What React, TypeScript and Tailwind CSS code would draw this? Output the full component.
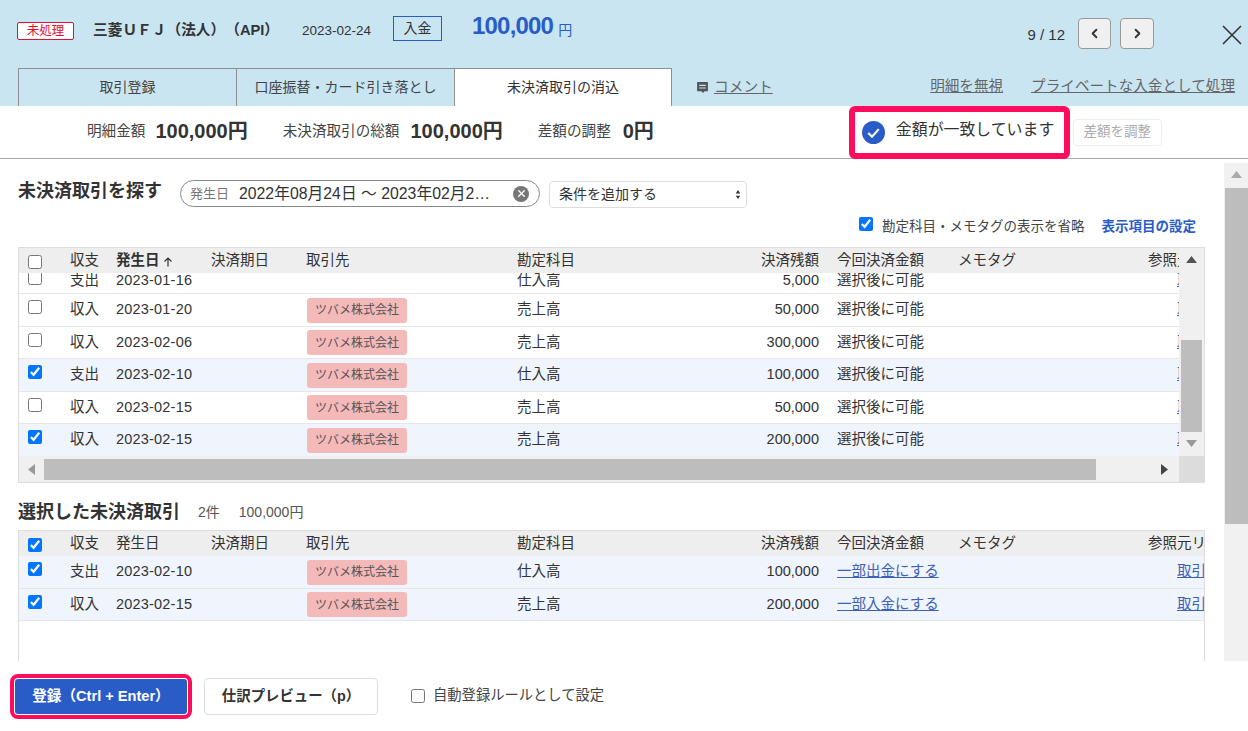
import { ChevronLeft, ChevronRight, X } from 'lucide-react';
import type { ReactNode } from 'react';

const FONT = "font-['Liberation_Sans','Noto_Sans_CJK_JP',sans-serif]";

type Row = { type: string; date: string; tag?: boolean; account: string; amount: string; checked?: boolean };

const searchRows: Row[] = [
  { type: '支出', date: '2023-01-16', account: '仕入高', amount: '5,000' },
  { type: '収入', date: '2023-01-20', tag: true, account: '売上高', amount: '50,000' },
  { type: '収入', date: '2023-02-06', tag: true, account: '売上高', amount: '300,000' },
  { type: '支出', date: '2023-02-10', tag: true, account: '仕入高', amount: '100,000', checked: true },
  { type: '収入', date: '2023-02-15', tag: true, account: '売上高', amount: '50,000' },
  { type: '収入', date: '2023-02-15', tag: true, account: '売上高', amount: '200,000', checked: true },
];

function Check({ checked, className = '' }: { checked?: boolean; className?: string }) {
  return <input type="checkbox" checked={!!checked} readOnly className={`m-0 size-[14px] shrink-0 ${className}`} />;
}

function HeaderRow({ checked, sorted, refLabel }: { checked?: boolean; sorted?: boolean; refLabel: string }) {
  return (
    <div className="flex h-[25px] w-[1240px] items-center bg-[#eeeeee] text-[14.5px] text-[#333]">
      <div className="w-[51px] pl-[9px]">
        <Check checked={checked} className="mt-[2px] block" />
      </div>
      <div className="w-[46px]">収支</div>
      <div className={`flex w-[95px] items-center ${sorted ? 'font-bold' : ''}`}>
        発生日
        {sorted && (
          <svg viewBox="0 0 10 10" className="ml-[3px] mt-[3px] size-[10px]" fill="none" stroke="#333" strokeWidth="1.2">
            <path d="M5 9.5V1M1.5 4.5 5 1l3.5 3.5" />
          </svg>
        )}
      </div>
      <div className="w-[95px]">決済期日</div>
      <div className="w-[211px]">取引先</div>
      <div className="w-[180px]">勘定科目</div>
      <div className="w-[122px] text-right">決済残額</div>
      <div className="ml-[18px] w-[121px]">今回決済金額</div>
      <div className="w-[190px]">メモタグ</div>
      <div className="whitespace-nowrap">{refLabel}</div>
    </div>
  );
}

function DataRow({ row, action, first }: { row: Row; action?: ReactNode; first?: boolean }) {
  return (
    <div
      className={`flex w-[1240px] items-center border-b border-[#e6e6e6] pt-px text-[14.5px] text-[#333] ${
        row.checked ? 'bg-[#f0f4fd]' : 'bg-white'
      } ${first ? 'mt-[-6px] h-[27px]' : 'h-[32.5px]'}`}
    >
      <div className="w-[51px] pb-[6px] pl-[9px]">
        <Check checked={row.checked} className="block" />
      </div>
      <div className="w-[46px]">{row.type}</div>
      <div className="w-[190px] tracking-[0.2px]">{row.date}</div>
      <div className="w-[211px]">
        {row.tag && (
          <span className="ml-px flex h-[25px] w-[100px] items-center justify-center rounded-[3px] bg-[#f4b9b9] text-[12px] text-[#555]">
            ツバメ株式会社
          </span>
        )}
      </div>
      <div className="w-[180px]">{row.account}</div>
      <div className="w-[122px] text-right">{row.amount}</div>
      <div className="ml-[18px] w-[311px]">{action ?? '選択後に可能'}</div>
      <div className="pl-[29px]">
        <span className="whitespace-nowrap text-[#3b62b8] underline">取引を開く</span>
      </div>
    </div>
  );
}

function Triangle({ dir, color = '#555' }: { dir: 'up' | 'down' | 'left' | 'right'; color?: string }) {
  const paths = { up: 'M0 8 5.5 1 11 8z', down: 'M0 1h11L5.5 8z', left: 'M9 0v11L2 5.5z', right: 'M2 0v11l7-5.5z' };
  return (
    <svg viewBox="0 0 11 11" className="size-[11px]" fill={color}>
      <path d={paths[dir]} />
    </svg>
  );
}

export default function App() {
  return (
    <div className={`${FONT} h-[731px] w-[1248px] overflow-hidden bg-white text-[#333] [text-spacing-trim:space-all]`}>
      {/* header */}
      <div className="h-[106px] bg-[#c9e5f2]">
        <div className="flex h-[68px] items-start pl-[17px] pr-[6px]">
          <span className="mt-[22px] flex h-[18px] w-[57px] items-center justify-center rounded-[2px] border border-[#e0102f] bg-white text-[12.5px] text-[#e0102f]">
            未処理
          </span>
          <span className="ml-[19px] mt-[19px] w-[209px] whitespace-nowrap text-[14.7px] font-bold">三菱ＵＦＪ（法人）（API）</span>
          <span className="mt-[21px] w-[91px] text-[13.5px]">2023-02-24</span>
          <span className="mt-[16px] flex h-[25px] w-[49px] items-center justify-center border border-[#2a5cc8] text-[14px]">
            入金
          </span>
          <span className="ml-[30px] mt-[8px] text-[24px] font-bold tracking-[-0.8px] text-[#2a5cc8]">100,000</span>
          <span className="ml-[5px] mt-[20px] text-[14px] text-[#2a5cc8]">円</span>
          <span className="ml-auto mt-[24px] text-[15px]">9 / 12</span>
          <button className="ml-[13px] mt-[18px] flex h-[31px] w-[33px] items-center justify-center rounded-[4px] border border-[#999] bg-[#f0f0f0]">
            <ChevronLeft size={15} strokeWidth={3} />
          </button>
          <button className="ml-[9px] mt-[18px] flex h-[31px] w-[34px] items-center justify-center rounded-[4px] border border-[#999] bg-[#f0f0f0]">
            <ChevronRight size={15} strokeWidth={3} />
          </button>
          <svg viewBox="0 0 20 20" className="ml-[68px] mt-[25px] size-[20px]" fill="none" stroke="#333" strokeWidth="1.6">
            <path d="M1 1l18 18M19 1 1 19" />
          </svg>
        </div>
        <div className="flex h-[38px] items-center pl-[18px] pr-[13px] text-[14px]">
          <div className="flex h-full w-[218px] items-center justify-center border-l border-t border-[#8f8f8f] text-[#444]">取引登録</div>
          <div className="flex h-full w-[218px] items-center justify-center border-l border-t border-[#8f8f8f] text-[#444]">口座振替・カード引き落とし</div>
          <div className="flex h-full w-[218px] items-center justify-center border-x border-t border-[#8f8f8f] bg-white">未決済取引の消込</div>
          <svg viewBox="0 0 12 12" className="ml-[24px] mt-px size-[13px]" fill="#555">
            <path d="M1 1h10v8.5H8L6.500 11 5 9.500H1zM3 3.500v1h6v-1zM3 6v1h6V6z" fillRule="evenodd" />
          </svg>
          <span className="ml-[5px] text-[14.7px] text-[#666] underline">コメント</span>
          <span className="ml-auto text-[14.6px] text-[#666] underline">明細を無視</span>
          <span className="ml-[28px] text-[14.6px] text-[#666] underline">プライベートな入金として処理</span>
        </div>
      </div>

      {/* summary */}
      <div className="flex h-[53px] items-center border-b border-[#aaa] pl-[87px] text-[14.6px] text-[#444]">
        <span>明細金額</span>
        <span className="ml-[10px] mt-[-3px] text-[20px] font-bold text-[#333]">100,000円</span>
        <span className="ml-[35px]">未決済取引の総額</span>
        <span className="ml-[11px] mt-[-3px] text-[20px] font-bold text-[#333]">100,000円</span>
        <span className="ml-[35px]">差額の調整</span>
        <span className="ml-[12px] mt-[-3px] text-[20px] font-bold text-[#333]">0円</span>
        <div className="ml-[195px] flex h-[53px] w-[221px] items-center rounded-[6px] border-[6px] border-[#ff0d5c] pl-[7px]">
          <svg viewBox="0 0 24 24" className="size-[23px] shrink-0">
            <circle cx="12" cy="12" r="12" fill="#2a5cc8" />
            <path d="m6.500 12.500 4 4 7-8" fill="none" stroke="#fff" strokeWidth="2.200" />
          </svg>
          <span className="ml-[11px] mt-[-5px] whitespace-nowrap text-[15.900px] text-[#333]">金額が一致しています</span>
        </div>
        <button className="ml-[3px] flex h-[27px] w-[89px] items-center justify-center rounded-[4px] border border-[#eee] text-[13.500px] text-[#aaa]">
          差額を調整
        </button>
      </div>

      {/* scrolling body */}
      <div className="flex h-[502px]">
        <div className="w-[1224px] overflow-hidden pl-[18px] pr-[19px]">
          <div className="flex h-[49px] items-start pt-[21px]">
            <h2 className="w-[162px] text-[18px] font-bold leading-[22px]">未決済取引を探す</h2>
            <div className="flex h-[27px] w-[360px] items-center rounded-full border border-[#888] pl-[9px] pr-[10px]">
              <span className="text-[13px] text-[#777]">発生日</span>
              <span className="ml-[10px] w-[265px] whitespace-nowrap text-[15.800px]">2022年08月24日 ～ 2023年02月2…</span>
              <span className="ml-auto flex size-[16px] items-center justify-center rounded-full bg-[#777] text-white">
                <X size={11} strokeWidth={3} />
              </span>
            </div>
            <div className="ml-[9px] mt-px flex h-[27px] w-[198px] items-center justify-between rounded-[4px] border border-[#ddd] pl-[9px] pr-[5px] text-[14px]">
              条件を追加する
              <svg viewBox="0 0 8 14" className="h-[11px] w-[6px]" fill="#333">
                <path d="M4 1 7 5.500H1zM4 13 1 8.500h6z" />
              </svg>
            </div>
          </div>
          <div className="flex h-[39px] items-start justify-end pr-[9px] pt-[8px]">
            <Check checked className="mt-px" />
            <span className="ml-[9px] mt-px text-[13.500px] text-[#444]">勘定科目・メモタグの表示を省略</span>
            <span className="ml-[17px] mt-px text-[13.500px] font-bold text-[#2a5cc8]">表示項目の設定</span>
          </div>

          {/* search results */}
          <div className="h-[236px] border border-[#ddd]">
            <div className="flex h-[208px]">
              <div className="w-[1160px] overflow-hidden">
                <HeaderRow sorted refLabel="参照元リンク" />
                <div className="h-[184px] overflow-hidden">
                  {searchRows.map((row, i) => (
                    <DataRow key={i} row={row} first={i === 0} />
                  ))}
                </div>
              </div>
              <div className="flex w-[25px] flex-col bg-[#f0f0f0]">
                <div className="flex h-[25px] items-center justify-center">
                  <Triangle dir="up" />
                </div>
                <div className="mx-[2px] mt-[67px] h-[92px] bg-[#bdbdbd]" />
                <div className="flex h-[24px] items-center justify-center">
                  <Triangle dir="down" color="#999" />
                </div>
              </div>
            </div>
            <div className="flex h-[26px]">
              <div className="flex w-[1160px] items-center bg-[#f0f0f0]">
                <div className="flex w-[25px] justify-center">
                  <Triangle dir="left" color="#999" />
                </div>
                <div className="h-[21px] w-[1052px] bg-[#bdbdbd]" />
                <div className="ml-[63px]">
                  <Triangle dir="right" color="#444" />
                </div>
              </div>
              <div className="w-[25px] bg-[#dcdcdc]" />
            </div>
          </div>

          {/* selected */}
          <div className="flex h-[47px] items-end pb-[7px]">
            <h2 className="text-[18px] font-bold leading-[22px]">選択した未決済取引</h2>
            <span className="ml-[18px] text-[14px] text-[#555]">2件</span>
            <span className="ml-[19px] text-[14px] text-[#555]">100,000円</span>
          </div>
          <div className="h-[200px] overflow-hidden border-x border-t border-[#ddd]">
            <HeaderRow checked refLabel="参照元リンク" />
            <DataRow row={searchRows[3]} action={<span className="text-[#3b62b8] underline">一部出金にする</span>} />
            <DataRow row={searchRows[5]} action={<span className="text-[#3b62b8] underline">一部入金にする</span>} />
          </div>
        </div>
        <div className="ml-0 mt-[4px] flex w-[24px] flex-col bg-[#f1f1f1]">
          <div className="flex h-[25px] items-center justify-center">
            <Triangle dir="up" color="#aaa" />
          </div>
          <div className="ml-[1px] h-[336px] bg-[#bdbdbd]" />
        </div>
      </div>

      {/* footer */}
      <div className="flex h-[70px] items-center pl-[10px]">
        <div className="rounded-[8px] border-[4px] border-[#ff0d5c] bg-white p-px">
          <button className="flex h-[35px] w-[172px] items-center justify-center rounded-[3px] bg-[#2a5cc8] pt-[2px] text-[14.6px] font-bold text-white">
            登録（Ctrl + Enter）
          </button>
        </div>
        <button className="ml-[12px] h-[37px] w-[174px] rounded-[4px] border border-[#ddd] bg-white pt-[2px] text-[14.4px] font-bold">
          仕訳プレビュー（p）
        </button>
        <Check className="ml-[33px]" />
        <span className="ml-[8px] text-[14.3px] text-[#444]">自動登録ルールとして設定</span>
      </div>
    </div>
  );
}
